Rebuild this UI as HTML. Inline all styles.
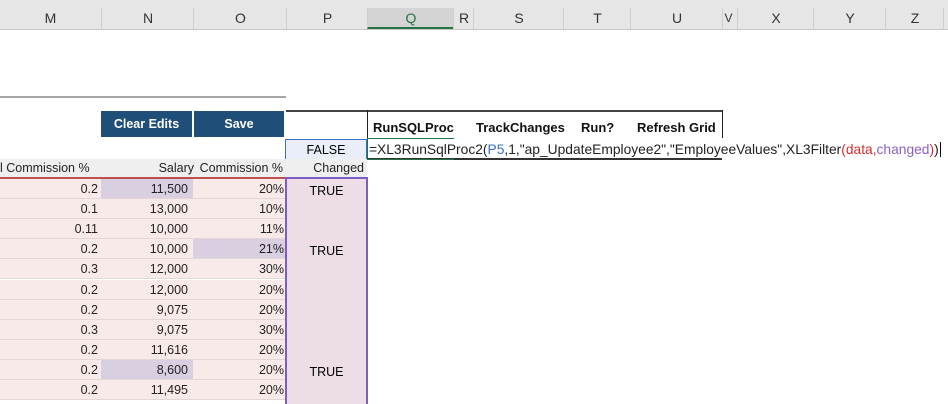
<!DOCTYPE html><html><head><style>
html,body{margin:0;width:948px;height:404px;overflow:hidden}
body{background:#fff;font-family:"Liberation Sans",sans-serif;position:relative}
.a{position:absolute}
.hdr{top:0;left:0;width:948px;height:29px;background:#e6e6e6;border-bottom:1px solid #c8c8c8}
.col{position:absolute;top:8px;height:21px;border-left:1px solid #cfcfcf;font-size:14px;color:#333;text-align:center;line-height:20px}
.r{position:absolute;height:19px;border-bottom:1px solid #e2d6d6;font-size:12.5px;text-align:right;line-height:21px;color:#222;box-sizing:content-box}
.btn{background:#1f4e79;color:#fff;font-size:12.5px;font-weight:bold;text-align:center;line-height:27px;height:26px;top:111px}
.b{font-weight:bold;font-size:13px;color:#111;top:120px}
.t{position:absolute;left:287px;width:79px;text-align:center;font-size:12.5px}
</style></head><body>
<div class="a hdr"></div>
<div class="col" style="left:0;width:101px;border:none">M</div>
<div class="col" style="left:101px;width:92px">N</div>
<div class="col" style="left:193px;width:93px">O</div>
<div class="col" style="left:286px;width:81px">P</div>
<div class="col" style="left:367px;width:86px;color:#217346;background:#d4d4d4;border-bottom:2px solid #217346;height:19px">Q</div>
<div class="col" style="left:453px;width:20px">R</div>
<div class="col" style="left:473px;width:90px">S</div>
<div class="col" style="left:563px;width:67px">T</div>
<div class="col" style="left:630px;width:92px">U</div>
<div class="col" style="left:722px;width:11px;font-size:12px">V</div>
<div class="col" style="left:737px;width:76px">X</div>
<div class="col" style="left:813px;width:72px">Y</div>
<div class="col" style="left:885px;width:58px">Z</div>
<div class="col" style="left:943px;width:5px"></div>

<div class="a" style="left:0;top:96px;width:286px;height:2px;background:#a6a6a6"></div>
<div class="a btn" style="left:101px;width:91px">Clear Edits</div>
<div class="a btn" style="left:194px;width:90px">Save</div>
<div class="a" style="left:286px;top:110px;width:436px;height:2px;background:#444"></div>
<div class="a" style="left:367px;top:110px;width:354px;height:28px;border:1px solid #222;border-top:none;border-bottom:none"></div>
<div class="a b" style="left:373px">RunSQLProc</div>
<div class="a b" style="left:476px">TrackChanges</div>
<div class="a b" style="left:581px">Run?</div>
<div class="a b" style="left:637px">Refresh Grid</div>
<div class="a" style="left:285px;top:139px;width:80px;height:19px;background:#e9eef8;border:1px solid #3a6fd0;font-size:12.5px;text-align:center;line-height:20px">FALSE</div>
<div class="a" style="left:367px;top:158px;width:355px;height:2px;background:#333"></div>
<div class="a" style="left:367px;top:138px;width:86px;height:20px;border:1px solid #217346;border-right:none"></div>
<div class="a" style="left:369px;top:142px;font-size:13.8px;white-space:nowrap;color:#222">=XL3RunSqlProc2(<span style="color:#3a6fd0">P5</span>,1,"ap_UpdateEmployee2","EmployeeValues",XL3Filter<span style="color:#d03030">(data,</span><span style="color:#8c5fc9">changed</span><span style="color:#d03030">)</span>)<span style="border-left:1px solid #000;margin-left:1px"></span></div>

<div class="a" style="left:0;top:159px;width:367px;height:18px;background:#efefef;font-size:12.5px;line-height:19px;color:#222">
<span class="a" style="left:0">l Commission %</span><span class="a" style="right:173px">Salary</span><span class="a" style="right:84px">Commission %</span><span class="a" style="right:3px">Changed</span></div>
<div class="a" style="left:0;top:177px;width:286px;height:2px;background:#c0504d"></div>
<div id="rows"></div>
<div class="a" style="left:285px;top:177px;width:79px;height:230px;background:#ecdde7;border:2px solid #7e5cc6;border-bottom:none"></div>
<div class="t" style="top:184px">TRUE</div>
<div class="t" style="top:244px">TRUE</div>
<div class="t" style="top:365px">TRUE</div>
<script>
var d=[["0.2","11,500","20%",1],["0.1","13,000","10%"],["0.11","10,000","11%"],["0.2","10,000","21%",2],["0.3","12,000","30%"],["0.2","12,000","20%"],["0.2","9,075","20%"],["0.3","9,075","30%"],["0.2","11,616","20%"],["0.2","8,600","20%",1],["0.2","11,495","20%"]];
var h="";d.forEach(function(r,i){var t=179+i*20.1;
h+='<div class="r" style="left:0;top:'+t+'px;width:98px;padding-right:3px;background:#f9eaea">'+r[0]+'</div>';
h+='<div class="r" style="left:101px;top:'+t+'px;width:87px;padding-right:5px;background:'+(r[3]==1?'#d9cfe0':'#f9eaea')+'">'+r[1]+'</div>';
h+='<div class="r" style="left:193px;top:'+t+'px;width:91px;padding-right:2px;background:'+(r[3]==2?'#d9cfe0':'#f9eaea')+'">'+r[2]+'</div>';});
document.getElementById("rows").innerHTML=h;
</script>
</body></html>
